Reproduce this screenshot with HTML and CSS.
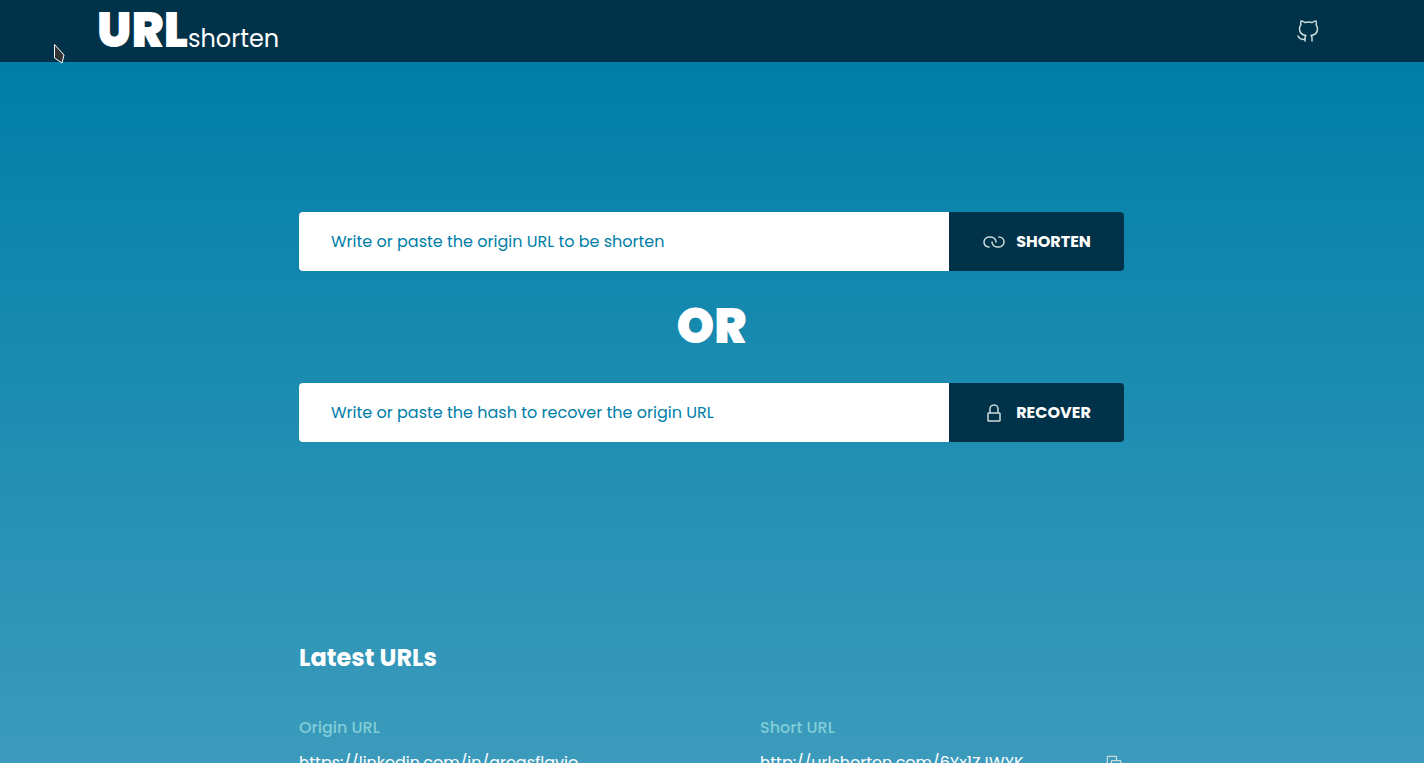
FILE: index.html
```html
<!DOCTYPE html>
<html lang="en">
<head>
<meta charset="utf-8">
<meta name="viewport" content="width=device-width, initial-scale=1">
<title>URLshorten</title>
<link rel="stylesheet" href="styles.css">
</head>
<body>
<header class="header">
  <a class="logo" href="#"><span class="logo-strong">URL</span><span class="logo-light">shorten</span></a>
  <a class="github" href="#" aria-label="GitHub">
    <svg class="icon" viewBox="0 0 24 24"><path d="M16 22.027V19.157C16.037 18.680 15.973 18.200 15.811 17.750C15.649 17.300 15.393 16.890 15.060 16.547C18.200 16.197 21.500 15.007 21.500 9.547C21.500 8.150 20.963 6.808 20 5.797C20.456 4.575 20.424 3.225 19.910 2.027C19.910 2.027 18.730 1.677 16 3.507C13.708 2.886 11.292 2.886 9 3.507C6.270 1.677 5.090 2.027 5.090 2.027C4.576 3.225 4.544 4.575 5 5.797C4.030 6.815 3.493 8.170 3.500 9.577C3.500 14.997 6.800 16.187 9.940 16.577C9.611 16.917 9.357 17.322 9.195 17.767C9.033 18.211 8.967 18.685 9 19.157V22.027"/><path d="M9 20.027C6 21 3.500 20.027 2 17.027"/></svg>
  </a>
</header>
<svg class="pointer" viewBox="0 0 12 21"><path d="M1.500 1.500L11 12 9 20 1.500 15z"/></svg>
<main class="main">
  <div class="content">
    <section class="forms">
      <form class="form">
        <input class="field" type="text" aria-label="Origin URL" placeholder="Write or paste the origin URL to be shorten">
        <button class="submit" type="button">
          <svg class="icon" viewBox="0 0 24 24"><path d="M14 11.998C14 9.506 11.683 7 8.857 7H7.143C4.303 7 2 9.238 2 11.998c0 2.378 1.710 4.368 4 4.873a5.300 5.300 0 0 0 1.143.124"/><path d="M10 11.998c0 2.491 2.317 4.997 5.143 4.997h1.714c2.840 0 5.143-2.237 5.143-4.997 0-2.379-1.710-4.370-4-4.874A5.300 5.300 0 0 0 16.857 7"/></svg>
          <span>SHORTEN</span>
        </button>
      </form>
      <h2 class="or">OR</h2>
      <form class="form">
        <input class="field" type="text" aria-label="Hash" placeholder="Write or paste the hash to recover the origin URL">
        <button class="submit" type="button">
          <svg class="icon" viewBox="0 0 24 24"><path d="M16 12h1.400a.6.6 0 0 1 .6.600v6.800a.6.6 0 0 1-.6.600H6.600a.6.6 0 0 1-.6-.600v-6.800a.6.6 0 0 1 .6-.600H8M16 12V8c0-1.333-.8-4-4-4S8 6.667 8 8v4M16 12H8"/></svg>
          <span>RECOVER</span>
        </button>
      </form>
    </section>
    <section class="latest">
      <h1 class="title">Latest URLs</h1>
      <table class="urls">
        <thead><tr><th class="origin">Origin URL</th><th>Short URL</th><th class="action"></th></tr></thead>
        <tbody><tr>
          <td><a href="#">https://linkedin.com/in/areasflavio</a></td>
          <td><a href="#">http://urlshorten.com/6Yx1ZJWYK</a></td>
          <td class="action"><button class="copy" type="button" aria-label="Copy"><svg class="icon" viewBox="0 0 24 24"><path d="M19.400 20H9.600a.6.6 0 0 1-.6-.600V9.600a.6.6 0 0 1 .6-.600h9.800a.6.6 0 0 1 .6.600v9.800a.6.6 0 0 1-.6.600z"/><path d="M15 9V4.600a.6.6 0 0 0-.6-.600H4.600a.6.6 0 0 0-.6.600v9.800a.6.6 0 0 0 .6.600H9"/></svg></button></td>
        </tr></tbody>
      </table>
    </section>
  </div>
</main>
</body>
</html>
```
FILE: styles.css
```css
* { box-sizing: border-box; margin: 0; padding: 0; }
body {
  height: 100vh;
  overflow: hidden;
  display: flex;
  flex-direction: column;
  background: #003249;
  color: #fff;
  font: 16px/24px Poppins, Inter, sans-serif;
}
a { color: inherit; text-decoration: none; }
.header {
  flex: none;
  height: 62px;
  padding: 0 104px 0 97px;
  display: flex;
  align-items: center;
  justify-content: space-between;
  background: #003249;
}
.logo { display: flex; align-items: baseline; padding-top: 8px; line-height: 60px; }
.logo-strong { font-size: 48px; font-weight: 900; }
.logo-light { font-size: 24px; }
.github { display: flex; }
.icon {
  width: 24px;
  height: 24px;
  fill: none;
  stroke: #ccdbdc;
  stroke-width: 1.5;
  stroke-linecap: round;
  stroke-linejoin: round;
}
.pointer {
  position: absolute;
  left: 53px;
  top: 43px;
  width: 12px;
  height: 21px;
  fill: #333;
  stroke: #fff;
  stroke-width: 1;
}
.main {
  flex: 1;
  min-height: 0;
  padding: 0 25px 0 24px;
  background: linear-gradient(#007ea7, #3c9bbc);
}
.content { width: 100%; max-width: 825px; margin: 0 auto; }
.forms { padding: 150px 0 198px; }
.form { display: flex; }
.field {
  flex: 1;
  min-width: 0;
  height: 59px;
  padding: 0 32px;
  border: 0;
  border-radius: 4px 0 0 4px;
  background: #fff;
  color: #007ea7;
  font: inherit;
}
.field::placeholder { color: #007ea7; opacity: 1; }
.submit {
  width: 175px;
  display: flex;
  align-items: center;
  justify-content: center;
  gap: 10px;
  border: 0;
  border-radius: 0 4px 4px 0;
  background: #003249;
  color: #fff;
  font: inherit;
  font-weight: 700;
}
.or { font-size: 48px; font-weight: 900; line-height: 72px; padding: 20px 0; text-align: center; }
.title { font-size: 24px; font-weight: 700; line-height: 36px; margin-bottom: 40px; }
.urls { width: 100%; border-collapse: collapse; table-layout: fixed; }
.urls th { color: #80ced7; font-weight: 500; text-align: left; padding-bottom: 11px; }
.urls .origin { width: 461px; }
.urls .action { width: 20px; vertical-align: top; }
.copy { display: block; border: 0; background: none; padding-top: 2px; }
.copy .icon { display: block; width: 20px; height: 20px; }
```
